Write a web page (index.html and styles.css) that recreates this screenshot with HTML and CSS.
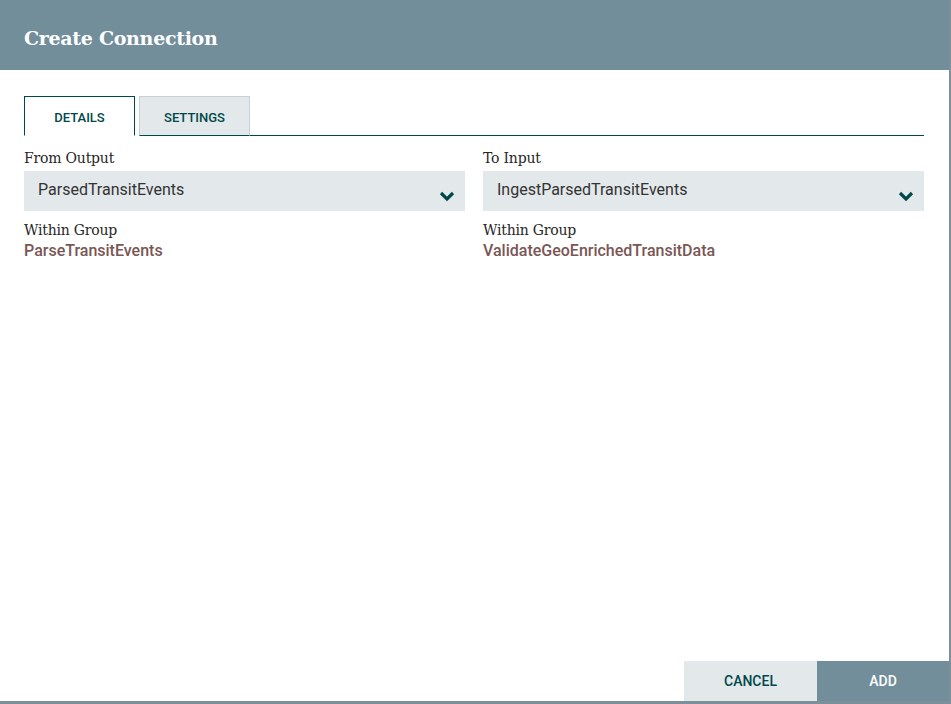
FILE: index.html
```html
<!DOCTYPE html>
<html>
<head>
<meta charset="utf-8">
<link rel="stylesheet" href="styles.css">
</head>
<body>
<div class="dialog">
  <div class="header"><span class="title">Create Connection</span></div>
  <div class="content">
    <div class="tabs">
      <div class="tab active">DETAILS</div>
      <div class="tab">SETTINGS</div>
      <div class="tab-rest"></div>
    </div>
    <div class="columns">
      <div class="col">
        <div class="label">From Output</div>
        <div class="select">
          <span>ParsedTransitEvents</span>
          <svg class="chev" width="16" height="12" viewBox="0 0 16 12"><polyline points="2,3 8,9 14,3" fill="none" stroke="#004849" stroke-width="3.2" stroke-linecap="butt" stroke-linejoin="miter"/></svg>
        </div>
        <div class="label">Within Group</div>
        <div class="value">ParseTransitEvents</div>
      </div>
      <div class="col">
        <div class="label">To Input</div>
        <div class="select">
          <span>IngestParsedTransitEvents</span>
          <svg class="chev" width="16" height="12" viewBox="0 0 16 12"><polyline points="2,3 8,9 14,3" fill="none" stroke="#004849" stroke-width="3.2" stroke-linecap="butt" stroke-linejoin="miter"/></svg>
        </div>
        <div class="label">Within Group</div>
        <div class="value">ValidateGeoEnrichedTransitData</div>
      </div>
    </div>
  </div>
  <div class="footer">
    <div class="btn cancel">CANCEL</div>
    <div class="btn add">ADD</div>
  </div>
</div>
</body>
</html>
```
FILE: styles.css
```css
html, body {
  margin: 0;
  padding: 0;
  background: #7d9099;
}
body {
  width: 951px;
  height: 704px;
  overflow: hidden;
}
.dialog {
  width: 949px;
  height: 701px;
  background: #ffffff;
  display: flex;
  flex-direction: column;
}
.header {
  height: 70px;
  background: #728e9b;
  display: flex;
  align-items: center;
  padding-left: 24px;
  box-sizing: border-box;
}
.title {
  font-family: "DejaVu Serif", serif;
  font-weight: bold;
  font-size: 19px;
  color: #ffffff;
  letter-spacing: -0.3px;
  padding-top: 5px;
}
.content {
  flex: 1;
  padding: 26px 25px 0 24px;
}
.tabs {
  display: flex;
  height: 40px;
}
.tab {
  width: 111px;
  box-sizing: border-box;
  display: flex;
  align-items: center;
  justify-content: center;
  padding-top: 2px;
  font-family: Roboto, "Liberation Sans", sans-serif;
  font-weight: 500;
  font-size: 13px;
  color: #004849;
  background: #e3e8eb;
  border: 1px solid #c7d2d7;
  border-bottom: 1px solid #004849;
}
.tab.active {
  background: #ffffff;
  border: 1px solid #004849;
  border-bottom: 1px solid #ffffff;
  margin-right: 4px;
}
.tab-rest {
  flex: 1;
  border-bottom: 1px solid #004849;
}
.columns {
  display: flex;
  gap: 18px;
  margin-top: 12px;
}
.col {
  flex: 1;
}
.label {
  font-family: "DejaVu Serif", serif;
  font-size: 14px;
  color: #262626;
  line-height: 20px;
  letter-spacing: -0.2px;
}
.select {
  height: 40px;
  background: #e3e8eb;
  display: flex;
  align-items: center;
  justify-content: space-between;
  padding: 0 10px 0 14px;
  margin: 3px 0 9px 0;
  font-family: Roboto, "Liberation Sans", sans-serif;
  font-size: 16px;
  color: #333333;
}
.select span {
  padding-bottom: 4px;
}
.chev {
  margin-top: 10px;
}
.value {
  font-family: Roboto, "Liberation Sans", sans-serif;
  font-weight: 500;
  font-size: 16px;
  color: #7a5654;
  line-height: 22px;
}
.footer {
  display: flex;
  justify-content: flex-end;
  height: 40px;
}
.btn {
  width: 133px;
  display: flex;
  align-items: center;
  justify-content: center;
  font-family: Roboto, "Liberation Sans", sans-serif;
  font-weight: 500;
  font-size: 14px;
}
.cancel {
  background: #e3e8eb;
  color: #004849;
}
.add {
  width: 132px;
  background: #728e9b;
  color: #ffffff;
}
```
